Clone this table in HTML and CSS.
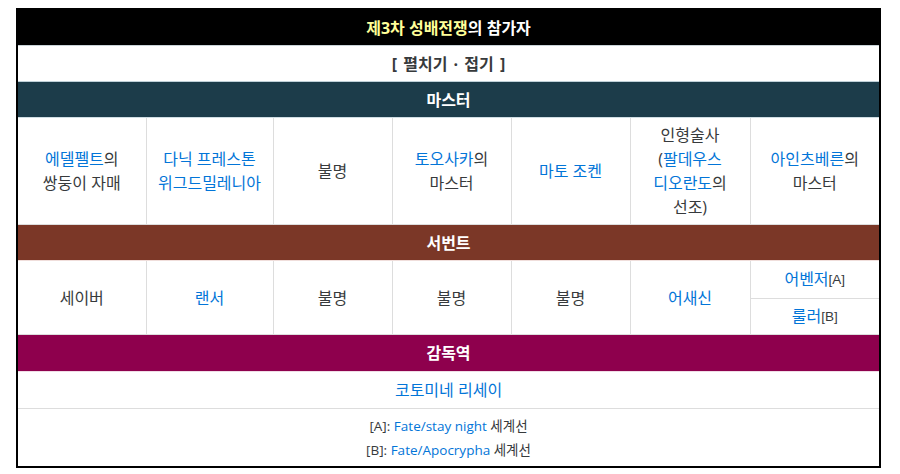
FILE: index.html
```html
<!DOCTYPE html>
<html lang="ko">
<head>
<meta charset="utf-8">
<link rel="stylesheet" href="styles.css">
</head>
<body>
<div class="wrap">
<table class="wiki">
  <colgroup>
    <col class="c1"><col class="c2"><col class="c3"><col class="c4"><col class="c5"><col class="c6"><col class="c7">
  </colgroup>
  <tr><td colspan="7" class="title"><span class="yel">제3차 성배전쟁</span>의 참가자</td></tr>
  <tr><td colspan="7" class="toggle">[ 펼치기 · 접기 ]</td></tr>
  <tr><td colspan="7" class="sec teal">마스터</td></tr>
  <tr class="masters">
    <td><a>에델펠트</a>의<br>쌍둥이 자매</td>
    <td><a>다닉 프레스톤<br>위그드밀레니아</a></td>
    <td>불명</td>
    <td><a>토오사카</a>의<br>마스터</td>
    <td><a>마토 조켄</a></td>
    <td>인형술사<br>(<a>팔데우스<br>디오란도</a>의<br>선조)</td>
    <td><a>아인츠베른</a>의<br>마스터</td>
  </tr>
  <tr><td colspan="7" class="sec brown">서번트</td></tr>
  <tr class="serv">
    <td rowspan="2">세이버</td>
    <td rowspan="2"><a>랜서</a></td>
    <td rowspan="2">불명</td>
    <td rowspan="2">불명</td>
    <td rowspan="2">불명</td>
    <td rowspan="2"><a>어새신</a></td>
    <td class="half top"><a>어벤저</a><span class="fn">[A]</span></td>
  </tr>
  <tr class="serv"><td class="half"><a>룰러</a><span class="fn">[B]</span></td></tr>
  <tr><td colspan="7" class="sec mag">감독역</td></tr>
  <tr><td colspan="7" class="one"><a>코토미네 리세이</a></td></tr>
  <tr><td colspan="7" class="notes">
    <div>[A]: <a>Fate/stay night</a> 세계선</div>
    <div>[B]: <a>Fate/Apocrypha</a> 세계선</div>
  </td></tr>
</table>
</div>
</body>
</html>
```
FILE: styles.css
```css
html, body { margin: 0; padding: 0; background: #fff; }
body {
  font-family: "Open Sans", "Noto Sans CJK KR", sans-serif;
  color: #373a3c;
  font-size: 16px;
}
.wrap { margin: 8px 0 0 16px; width: 865px; }
.wiki {
  width: 865px;
  table-layout: fixed;
  border-collapse: collapse;
  border: 2px solid #000;
}
.c1 { width: 129px; } .c2 { width: 127px; } .c3 { width: 119px; } .c4 { width: 119px; }
.c5 { width: 119px; } .c6 { width: 120px; } .c7 { width: 130px; }
.wiki td {
  border: 1px solid #dddddd;
  text-align: center;
  vertical-align: middle;
  padding: 5px 8px;
  line-height: 24px;
}
.wiki a { color: #0275d8; text-decoration: none; }
.wiki td.title {
  background: #000; color: #fff; font-weight: bold; height: 25px;
  border-color: #000 #000 #c9d3d8 #000;
}
.yel { color: #ffff99; }
.wiki td.toggle { font-weight: bold; color: #373a3c; height: 25px; border-bottom-color: #bfd0d8; word-spacing: 2px; }
.wiki td.sec { color: #fff; font-weight: bold; height: 25px; }
.teal { background: #1c3c4a; }
.brown { background: #7b3727; }
.mag { background: #8e004d; }
.wiki td.teal { border-color: #bfd0d8 #1c3c4a #cfdde3 #1c3c4a; }
.wiki td.brown { border-color: #e8d8d4 #7b3727 #f0dedb #7b3727; }
.wiki td.mag { border-color: #ead0dc #8e004d #f0dde6 #8e004d; height: 26px; }
.masters td { height: 96px; }
.serv td { height: 24px; }
.wiki td.top { height: 27px; }
.wiki td.half { padding: 5px 4px; }
.fn { font-size: 13.5px; color: #373a3c; font-family: "Liberation Sans", "Noto Sans CJK KR", sans-serif; vertical-align: 1px; }
.wiki td.one { height: 26px; }
.wiki td.notes { font-size: 13.5px; padding: 5px 10px 4px; }
.notes div { line-height: 24px; }
```
